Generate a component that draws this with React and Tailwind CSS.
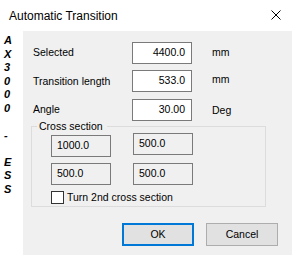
import React from "react";

const letters = ["A", "X", "3", "0", "0", "0", "\u00a0", "-", "\u00a0", "E", "S", "S"];

function Field({ value }) {
  return (
    <div className="w-[60px] h-[22px] border border-[#7a7a7a] bg-white flex items-center justify-end pr-[6px] text-black">
      {value}
    </div>
  );
}

function GrayField({ value, extra = "" }) {
  return (
    <div className={"w-[60px] h-[22px] border border-[#7a7a7a] bg-[#f0f0f0] flex items-center pl-[5px] text-black " + extra}>
      {value}
    </div>
  );
}

export default function App() {
  return (
    <div
      className="w-[292px] h-[255px] bg-white overflow-hidden flex flex-col text-[10.5px] text-black"
      style={{ fontFamily: '"Liberation Sans", Arial, sans-serif' }}
    >
      <div className="h-[31px] flex items-center justify-between pl-[9px] pr-[11px] shrink-0">
        <span className="text-[12px]">Automatic Transition</span>
        <svg width="10" height="10" viewBox="0 0 10 10" className="mt-[-2px]">
          <path d="M0.5 0.5 L9.5 9.5 M9.5 0.5 L0.5 9.5" stroke="#000" strokeWidth="1" fill="none" />
        </svg>
      </div>
      <div className="flex flex-1">
        <div className="w-[23px] shrink-0 pt-[3px] pl-[4px] font-bold italic text-[11px] leading-[13.5px]">
          {letters.map((c, i) => (
            <div key={i}>{c}</div>
          ))}
        </div>
        <div className="flex-1 bg-[#f0f0f0] pt-[11px] pl-[8px] flex flex-col">
          <div className="pl-[2px] flex items-center h-[22px]">
            <span className="w-[99px]">Selected</span>
            <Field value="4400.0" />
            <span className="ml-[20px]">mm</span>
          </div>
          <div className="pl-[2px] flex items-center h-[22px] mt-[6px]">
            <span className="w-[99px] mt-[1px]">Transition length</span>
            <Field value="533.0" />
            <span className="ml-[20px] mt-[-3px]">mm</span>
          </div>
          <div className="pl-[2px] flex items-center h-[22px] mt-[7px]">
            <span className="w-[99px] mt-[-1px]">Angle</span>
            <Field value="30.00" />
            <span className="ml-[20px] mt-[2px]">Deg</span>
          </div>
          <fieldset className="w-[235px] border border-[#dcdcdc] pb-[2px]">
            <legend className="ml-[5px] pl-[2px] pr-[4px] leading-[11px]">Cross section</legend>
            <div className="pl-[19px] flex items-start gap-[22px] pt-[1px]">
              <GrayField value="1000.0" extra="mt-[2px]" />
              <GrayField value="500.0" />
            </div>
            <div className="pl-[19px] flex items-start gap-[22px] mt-[6px]">
              <GrayField value="500.0" />
              <GrayField value="500.0" />
            </div>
            <div className="pl-[19px] flex items-center mt-[6px] h-[13px]">
              <div className="w-[13px] h-[13px] border border-[#333] bg-white" />
              <span className="ml-[3px]">Turn 2nd cross section</span>
            </div>
          </fieldset>
          <div className="flex justify-end pr-[14px] mt-[16px] gap-[12px]">
            <button className="w-[72px] h-[23px] border-2 border-[#0078d7] bg-[#e1e1e1] text-black">OK</button>
            <button className="w-[72px] h-[23px] border border-[#adadad] bg-[#e1e1e1] text-black">Cancel</button>
          </div>
        </div>
      </div>
    </div>
  );
}
